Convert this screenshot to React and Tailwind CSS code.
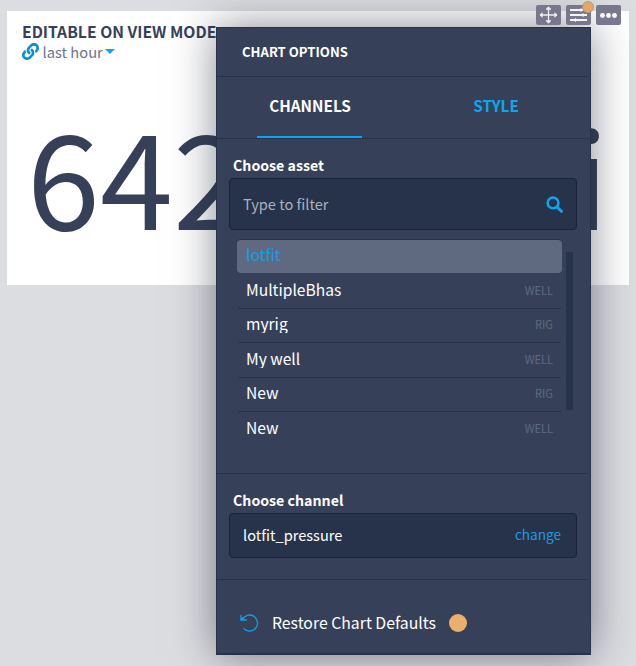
import React from "react";

const assets = [
  { name: "lotfit", type: "", active: true, h: "h-[34px] pt-1" },
  { name: "MultipleBhas", type: "WELL", h: "h-9 pt-1.5" },
  { name: "myrig", type: "RIG", h: "h-[34px] pt-1" },
  { name: "My well", type: "WELL", h: "h-[35px] pt-[5px]" },
  { name: "New", type: "RIG", h: "h-[34px] pt-1" },
  { name: "New", type: "WELL", h: "h-[35px] pt-[5px]", last: true },
];

function ToolButton({ children }) {
  return (
    <div className="relative flex h-5 w-[25px] items-center justify-center rounded-[2px] bg-[#77788d]">
      {children}
    </div>
  );
}

function MoveIcon() {
  return (
    <svg width="19" height="18" viewBox="0 0 19 18" fill="none" stroke="#eeeef2" strokeWidth="1.3" className="-mt-px shrink-0">
      <path d="M9.5 1V17M1 9H18" />
      <path d="M7 3.3L9.5 .9L12 3.3ZM7 14.7L9.5 17.1L12 14.7ZM3.2 6.7L.9 9L3.2 11.3ZM15.8 6.7L18.1 9L15.8 11.3Z" strokeWidth=".8" fill="#eeeef2" />
    </svg>
  );
}

function SlidersIcon() {
  return (
    <svg width="17" height="14" viewBox="0 0 17 14" className="shrink-0" fill="#f4f4f7">
      <path d="M0 1.1h13v1.8H0zM0 6.1h17v1.8H0zM0 11.1h17v1.8H0z" />
      <path d="M10.5 0L14 2L10.5 4zM12.5 5L16 7L12.5 9zM6 10L2.5 12L6 14z" />
    </svg>
  );
}

function DotsIcon() {
  return (
    <svg width="17" height="5" viewBox="0 0 17 5" className="shrink-0" fill="#fff">
      <circle cx="2.5" cy="2.5" r="2.4" />
      <circle cx="8.5" cy="2.5" r="2.4" />
      <circle cx="14.5" cy="2.5" r="2.4" />
    </svg>
  );
}

function LinkIcon() {
  return (
    <svg width="17" height="17" viewBox="0 0 512 512" fill="#0a8fd0" className="-mt-px shrink-0">
      <path d="M326.612 185.391c59.747 59.809 58.927 155.698.36 214.59-.11.12-.24.25-.36.37l-67.2 67.2c-59.27 59.27-155.699 59.262-214.96 0-59.27-59.26-59.27-155.7 0-214.96l37.106-37.106c9.84-9.84 26.786-3.3 27.294 10.606.648 17.722 3.826 35.527 9.69 52.721 1.986 5.822.567 12.262-3.783 16.612l-13.087 13.087c-28.026 28.026-28.905 73.66-1.155 101.96 28.024 28.579 74.086 28.749 102.325.51l67.2-67.19c28.191-28.191 28.073-73.757 0-101.83-3.701-3.694-7.429-6.564-10.341-8.569a16.037 16.037 0 0 1-6.947-12.606c-.396-10.567 3.348-21.456 11.698-29.806l21.054-21.055c5.521-5.521 14.182-6.199 20.584-1.731a152.482 152.482 0 0 1 20.522 17.197zM467.547 44.449c-59.261-59.262-155.69-59.27-214.96 0l-67.2 67.2c-.12.12-.25.25-.36.37-58.566 58.892-59.387 154.781.36 214.59a152.454 152.454 0 0 0 20.521 17.196c6.402 4.468 15.064 3.789 20.584-1.731l21.054-21.055c8.35-8.35 12.094-19.239 11.698-29.806a16.037 16.037 0 0 0-6.947-12.606c-2.912-2.005-6.64-4.875-10.341-8.569-28.073-28.073-28.191-73.639 0-101.83l67.2-67.19c28.239-28.239 74.3-28.069 102.325.51 27.75 28.3 26.872 73.934-1.155 101.96l-13.087 13.087c-4.35 4.35-5.769 10.79-3.783 16.612 5.864 17.194 9.042 34.999 9.69 52.721.509 13.906 17.454 20.446 27.294 10.606l37.106-37.106c59.271-59.259 59.271-155.699.001-214.959z" />
    </svg>
  );
}

function SearchIcon() {
  return (
    <svg width="17" height="17" viewBox="0 0 17 17" fill="none" stroke="#0ea5ef" className="shrink-0">
      <circle cx="7" cy="6.9" r="5.4" strokeWidth="2.5" />
      <path d="M11 11L15.4 15.3" strokeWidth="3" strokeLinecap="round" />
    </svg>
  );
}

function RestoreIcon() {
  return (
    <svg width="19" height="18" viewBox="0 0 19 18" fill="none" stroke="#1c9be4" strokeWidth="1.3" className="shrink-0">
      <path d="M3.6 14.4A8 8 0 1 0 2.3 5.6" />
      <path d="M1 .8V6H6.8M1.2 5.8L3.6 3.2" />
    </svg>
  );
}

export default function App() {
  return (
    <div className="relative h-[666px] w-[636px] overflow-hidden bg-[#dcdde1] px-[7px] pt-[11px] font-['Noto_Sans_CJK_SC',sans-serif]">
      <div className="h-[274px] w-[622px] overflow-hidden bg-white pt-[10px] pl-[15px] text-[#364159]">
        <div className="h-5 text-[15.7px] leading-[22px] font-bold whitespace-nowrap">EDITABLE ON VIEW MODE</div>
        <div className="flex h-[21px] items-center text-[14.7px] leading-[21px] text-[#6c768b]">
          <LinkIcon />
          <span className="ml-[3.5px]">last hour</span>
          <span className="ml-[2.5px] border-x-[5px] border-t-[5px] border-x-transparent border-t-[#0ea5ef]" />
        </div>
        <div className="mt-[36px] ml-[5px] flex h-[150px] w-[582px] justify-between text-[131.5px] leading-[150px] whitespace-nowrap">
          <span>642</span>
          <span>i</span>
        </div>
      </div>

      <div className="absolute top-[27px] left-[216px] flex h-[628px] w-[375px] flex-col border border-b-2 border-[#27334a] bg-[#364159] text-white shadow-[0_0_40px_rgba(20,25,40,0.5)]">
        <div className="mr-px flex h-[49px] shrink-0 items-center border-b border-[#27334a] pl-[25px] text-[13.1px] font-bold">CHART OPTIONS</div>
        <div className="mr-px flex h-[62px] shrink-0 border-b border-[#27334a] text-[15.3px] font-bold">
          <div className="ml-10 flex w-[105px] items-center justify-center border-b-2 border-[#0ea5ef] pb-0.5 pl-px">CHANNELS</div>
          <div className="ml-[82px] flex w-[104px] items-center justify-center border-b-2 border-transparent pb-0.5 text-[#0ea5ef]">STYLE</div>
        </div>
        <div className="mr-px h-[335px] shrink-0 border-b border-[#27334a] pt-[14px] pl-3">
          <div className="h-[25px] pl-1 text-[14.2px] leading-6 font-bold">Choose asset</div>
          <div className="flex h-[52px] w-[348px] items-center justify-between rounded-[4px] border border-[#18233a] bg-[#27334a] pr-[13px] pl-[13px] text-[14.6px] text-[#a9b1bf]">
            <span>Type to filter</span>
            <SearchIcon />
          </div>
          <div className="mt-[9px] flex pl-2">
            <div className="w-[325px]">
              {assets.map((a, i) => (
                <div key={i} className={a.active ? "rounded-[4px] border-t border-[#27334a] bg-[#5f6a80] text-[#1c9be4]" : ""}>
                  <div
                    className={
                      "mx-px flex items-start justify-between px-2 " +
                      (a.active ? "h-[33px] pt-1" : a.h + (a.last ? "" : " border-b border-[#27334a]"))
                    }
                  >
                    <span className="h-5 overflow-hidden text-[15.6px] leading-5">{a.name}</span>
                    <span className="mt-px text-[11.1px] leading-[20px] text-[#5f6a80]">{a.type}</span>
                  </div>
                </div>
              ))}
            </div>
            <div className="mt-[13px] ml-1 h-[158px] w-[7px] bg-[#27334a]" />
          </div>
        </div>
        <div className="mr-px h-[106px] shrink-0 border-b border-[#27334a] pt-[14px] pl-3">
          <div className="h-[25px] pl-1 text-[14.2px] leading-6 font-bold">Choose channel</div>
          <div className="flex h-[45px] w-[348px] items-center justify-between rounded-[4px] border border-[#18233a] bg-[#27334a] pr-[15px] pb-0.5 pl-[13px] text-[14.6px]">
            <span>lotfit_pressure</span>
            <span className="text-[13.6px] text-[#1c9be4]">change</span>
          </div>
        </div>
        <div className="flex h-[73px] shrink-0 items-center pt-3 pl-[23px] text-[15.8px]">
          <RestoreIcon />
          <span className="ml-[13px]">Restore Chart Defaults</span>
          <span className="ml-[13px] size-[18px] rounded-full bg-[#ecaf6b]" />
        </div>
      </div>

      <div className="absolute top-[5px] left-[536px] flex gap-[5px]">
        <ToolButton><MoveIcon /></ToolButton>
        <ToolButton>
          <SlidersIcon />
          <span className="absolute -top-1 left-4 size-3 rounded-full border border-[#a89a8c] bg-[#e6a75f]" />
        </ToolButton>
        <ToolButton><DotsIcon /></ToolButton>
      </div>
    </div>
  );
}
